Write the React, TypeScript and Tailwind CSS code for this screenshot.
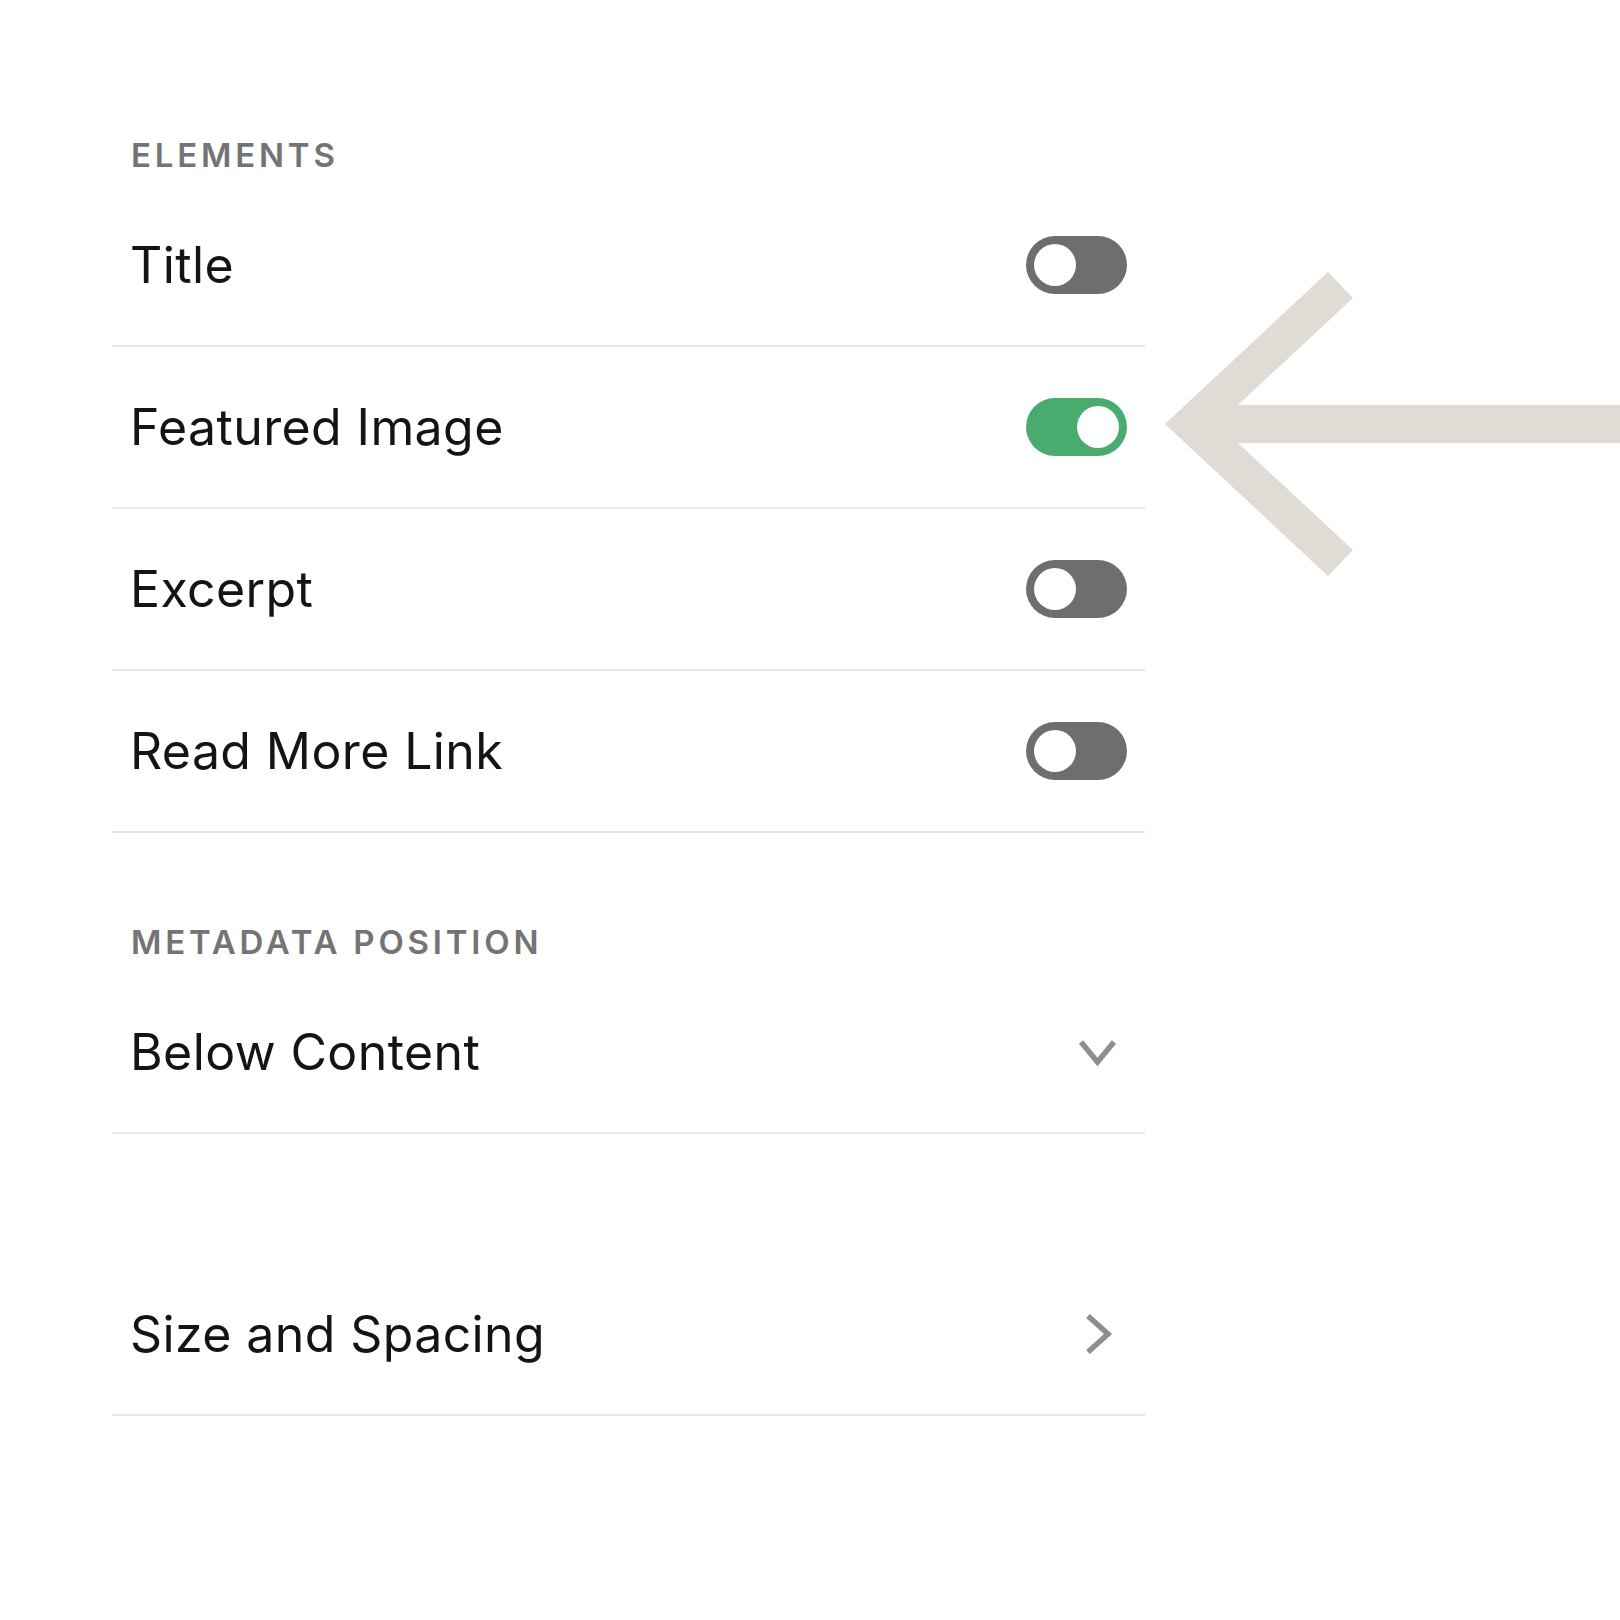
import React from "react";

const FONT = { fontFamily: "Inter, 'Liberation Sans', Arial, sans-serif" };

function Toggle({ on }: { on: boolean }) {
  return (
    <div
      className={
        "flex h-[58px] w-[101px] items-center rounded-full p-[8px] " +
        (on ? "justify-end bg-[#4aab6f]" : "justify-start bg-[#6e6e6e]")
      }
    >
      <div className="h-[42px] w-[42px] rounded-full bg-white" />
    </div>
  );
}

function Row({ label, right }: { label: string; right: React.ReactNode }) {
  return (
    <div className="flex h-[162px] items-center justify-between border-b-2 border-[#e8e8e8] pl-[18px] pr-[18px]">
      <span className="text-[50px] leading-none tracking-[0.4px] text-[#141414]">{label}</span>
      {right}
    </div>
  );
}

function Heading({ children }: { children: React.ReactNode }) {
  return (
    <div className="flex h-[60px] items-center pl-[19px]">
      <span className="text-[33px] font-semibold uppercase leading-none tracking-[0.115em] text-[#747474]">
        {children}
      </span>
    </div>
  );
}

const ChevronDown = () => (
  <svg width="48" height="48" viewBox="0 0 48 48" className="mr-[4px]">
    <polyline points="6,14 22.5,34 39,14" fill="none" stroke="#8e8e8e" strokeWidth="5.5" />
  </svg>
);

const ChevronRight = () => (
  <svg width="48" height="48" viewBox="0 0 48 48" className="mr-[4px]">
    <polyline points="13,6 33,24 13,42" fill="none" stroke="#8e8e8e" strokeWidth="5.5" />
  </svg>
);

export default function App() {
  return (
    <div className="relative h-[1620px] w-[1620px] overflow-hidden bg-white" style={FONT}>
      <div className="ml-[112px] w-[1033px] pt-[125px]">
        <Heading>Elements</Heading>
        <Row label="Title" right={<Toggle on={false} />} />
        <Row label="Featured Image" right={<Toggle on={true} />} />
        <Row label="Excerpt" right={<Toggle on={false} />} />
        <Row label="Read More Link" right={<Toggle on={false} />} />
        <div className="mt-[79px]">
          <Heading>Metadata Position</Heading>
        </div>
        <Row label="Below Content" right={<ChevronDown />} />
        <div className="mt-[120px]">
          <Row label="Size and Spacing" right={<ChevronRight />} />
        </div>
      </div>
      <svg
        className="absolute left-0 top-0"
        width="1620"
        height="1620"
        viewBox="0 0 1620 1620"
      >
        <polygon
          points="1165,424 1328,272 1353,298 1238,405 1620,405 1620,443 1238,443 1353,550 1328,576"
          fill="#e0dbd5"
        />
      </svg>
    </div>
  );
}
